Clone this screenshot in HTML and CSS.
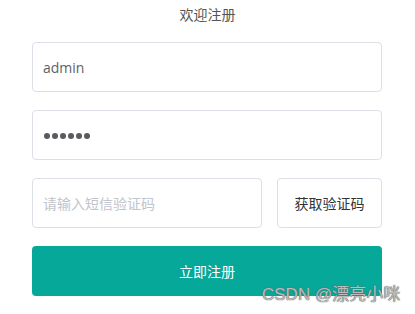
FILE: index.html
```html
<!DOCTYPE html>
<html lang="zh">
<head>
<meta charset="utf-8">
<link rel="stylesheet" href="styles.css">
</head>
<body>
<div class="page">
  <div class="title">欢迎注册</div>
  <form class="form">
    <div class="field"><span class="value">admin</span></div>
    <div class="field"><span class="dots" aria-label="••••••"><i></i><i></i><i></i><i></i><i></i><i></i></span></div>
    <div class="row">
      <div class="field code"><span class="placeholder">请输入短信验证码</span></div>
      <div class="btn-code">获取验证码</div>
    </div>
    <div class="btn-submit">立即注册</div>
  </form>
</div>
<div class="watermark">CSDN @漂亮小咪</div>
</body>
</html>
```
FILE: styles.css
```css
html, body {
  margin: 0;
  padding: 0;
  background: #fff;
}
body {
  font-family: "Noto Sans CJK SC", "Noto Sans", sans-serif;
  font-size: 14px;
  color: #606266;
  position: relative;
  height: 314px;
  overflow: hidden;
}
.page {
  width: 350px;
  margin-left: 32px;
  padding-top: 3px;
}
.title {
  text-align: center;
  line-height: 22px;
  height: 22px;
  color: #555;
  font-size: 14px;
  padding-left: 1px;
}
.form {
  margin-top: 17px;
  display: flex;
  flex-direction: column;
  gap: 18px;
}
.field {
  box-sizing: border-box;
  height: 50px;
  border: 1px solid #dcdfe6;
  border-radius: 4px;
  padding: 0 10px;
  display: flex;
  align-items: center;
}
.value {
  font-family: "Open Sans", "Noto Sans", sans-serif;
  color: #606266;
  font-size: 14px;
}
.dots {
  display: flex;
  gap: 2px;
  padding-left: 1px;
  padding-top: 2px;
}
.dots i {
  display: block;
  width: 6px;
  height: 6px;
  border-radius: 50%;
  background: #5a5a5e;
}
.row {
  display: flex;
  gap: 15px;
}
.code {
  flex: 1;
}
.placeholder {
  color: #c0c4cc;
}
.btn-code {
  box-sizing: border-box;
  width: 105px;
  height: 50px;
  border: 1px solid #dcdfe6;
  border-radius: 4px;
  display: flex;
  align-items: center;
  justify-content: center;
  color: #333;
}
.btn-submit {
  height: 50px;
  border-radius: 4px;
  background: #06a899;
  color: #fff;
  display: flex;
  align-items: center;
  justify-content: center;
}
.watermark {
  position: absolute;
  left: 262px;
  top: 284px;
  font-size: 17px;
  line-height: 22px;
  font-family: "Liberation Sans", "Noto Sans CJK SC", sans-serif;
  color: #bbb;
  text-shadow: 0 0 1px #666, 0 0 1px #666;
}
```
